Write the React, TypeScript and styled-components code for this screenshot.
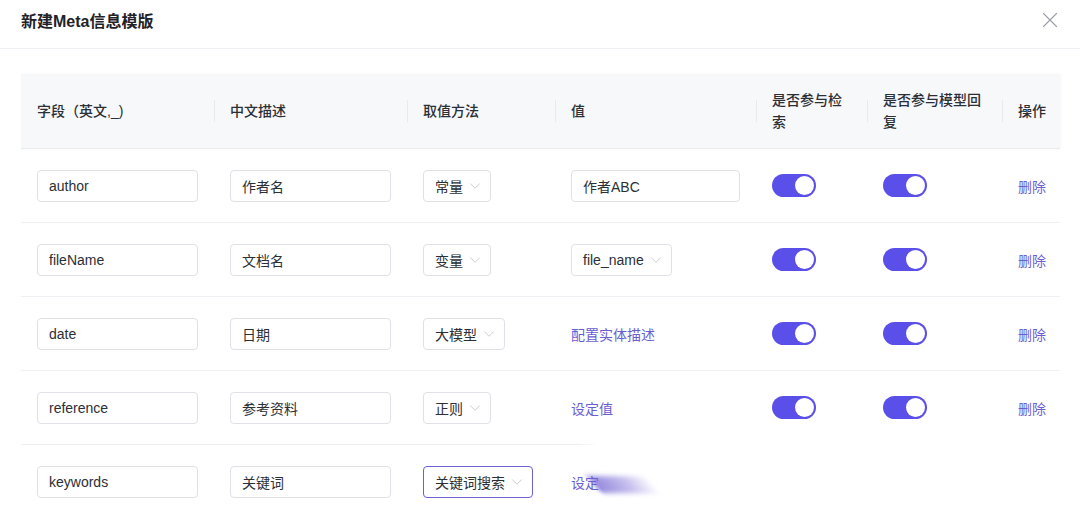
import React from "react";
import styled, { createGlobalStyle, css } from "styled-components";
import { X, ChevronDown } from "lucide-react";

const GlobalStyle = createGlobalStyle`
  body {
    margin: 0;
    background: #fff;
    font-family: "Liberation Sans", "Noto Sans CJK SC", sans-serif;
    color: #1f2329;
  }
  * { box-sizing: border-box; }
`;

const COLS = "193px 193px 148px 201px 111px 135px 58px";
const PURPLE = "#5b4fe9";
const LINK = "#6b5dd3";

const Modal = styled.div`
  width: 1080px;
  height: 516px;
  overflow: hidden;
  background: #fff;
`;

const Header = styled.div`
  height: 49px;
  display: flex;
  align-items: center;
  justify-content: space-between;
  padding: 0 17px 8px 21px;
  border-bottom: 1px solid #f0f1f4;
`;

const Title = styled.h3`
  margin: 0;
  font-size: 16px;
  font-weight: 600;
  color: #1f2329;
`;

const CloseBtn = styled.span`
  display: flex;
  color: #9a9ea7;
`;

const Body = styled.div`
  padding: 25px 20px 0 21px;
`;

const Table = styled.div`
  width: 1039px;
`;

const HeadRow = styled.div`
  display: grid;
  grid-template-columns: ${COLS};
  height: 75px;
  align-items: center;
  background: #f7f8fa;
  border-bottom: 1px solid #e9ebef;
  box-shadow: 1px 0 3px rgba(0, 0, 0, 0.04);
`;

const HeadCell = styled.div<{ $first?: boolean }>`
  position: relative;
  padding: 0 16px;
  font-size: 14px;
  font-weight: 500;
  line-height: 22px;
  color: #2b2f36;
  white-space: ${(p) => (p.$first ? "nowrap" : "normal")};
  ${(p) =>
    !p.$first &&
    css`
      &::before {
        content: "";
        position: absolute;
        left: 0;
        top: 50%;
        height: 22px;
        margin-top: -11px;
        width: 1px;
        background: #e8eaee;
      }
    `}
  &:last-child {
    padding-right: 0;
    white-space: nowrap;
  }
`;

const Row = styled.div<{ $divider: "full" | "partial" | "none" }>`
  display: grid;
  grid-template-columns: ${COLS};
  height: 74px;
  align-items: center;
  ${(p) =>
    p.$divider === "full" &&
    css`
      border-bottom: 1px solid #eef0f3;
    `}
  ${(p) =>
    p.$divider === "partial" &&
    css`
      padding-bottom: 1px;
      background: linear-gradient(to right, #eceef2 0, #eceef2 555px, rgba(236, 238, 242, 0) 578px)
        left bottom / 100% 1px no-repeat;
    `}
`;

const Cell = styled.div`
  padding: 0 16px;
  display: flex;
  align-items: center;
  &:last-child {
    padding-right: 0;
  }
`;

const Input = styled.div<{ $w: number }>`
  width: ${(p) => p.$w}px;
  height: 32px;
  display: flex;
  align-items: center;
  padding: 0 11px;
  border: 1px solid #dfe1e6;
  border-radius: 4px;
  font-size: 14px;
  color: #2b2f36;
`;

const Select = styled.div<{ $active?: boolean }>`
  height: 32px;
  display: inline-flex;
  align-items: center;
  gap: 5px;
  padding: 0 8px 0 11px;
  border: 1px solid ${(p) => (p.$active ? "#6b61d6" : "#dfe1e6")};
  border-radius: 4px;
  font-size: 14px;
  color: #2b2f36;
  white-space: nowrap;
  svg {
    color: #bfc2c9;
    margin: 0 -2px;
  }
`;

const Link = styled.span`
  font-size: 14px;
  color: ${LINK};
  white-space: nowrap;
`;

const Smear = styled.span`
  display: inline-block;
  width: 60px;
  height: 17px;
  margin-left: -6px;
  vertical-align: middle;
  background: linear-gradient(
    90deg,
    rgba(110, 95, 210, 0.75) 0%,
    rgba(125, 110, 215, 0.45) 55%,
    rgba(150, 140, 225, 0) 100%
  );
  filter: blur(2.5px);
  transform: skewX(40deg) translateY(1px);
`;

const Toggle = styled.span`
  position: relative;
  width: 44px;
  height: 23px;
  border-radius: 12px;
  background: ${PURPLE};
  &::after {
    content: "";
    position: absolute;
    right: 2px;
    top: 2px;
    width: 19px;
    height: 19px;
    border-radius: 50%;
    background: #fff;
  }
`;

type Method = { label: string; active?: boolean };
type Value =
  | { kind: "input"; text: string }
  | { kind: "select"; text: string }
  | { kind: "link"; text: string; smear?: boolean };

interface RowData {
  field: string;
  desc: string;
  method: Method;
  value: Value;
  toggles: boolean;
  divider: "full" | "partial" | "none";
}

const rows: RowData[] = [
  { field: "author", desc: "作者名", method: { label: "常量" }, value: { kind: "input", text: "作者ABC" }, toggles: true, divider: "full" },
  { field: "fileName", desc: "文档名", method: { label: "变量" }, value: { kind: "select", text: "file_name" }, toggles: true, divider: "full" },
  { field: "date", desc: "日期", method: { label: "大模型" }, value: { kind: "link", text: "配置实体描述" }, toggles: true, divider: "full" },
  { field: "reference", desc: "参考资料", method: { label: "正则" }, value: { kind: "link", text: "设定值" }, toggles: true, divider: "partial" },
  { field: "keywords", desc: "关键词", method: { label: "关键词搜索", active: true }, value: { kind: "link", text: "设定", smear: true }, toggles: false, divider: "none" },
];

const headers = ["字段（英文,_)", "中文描述", "取值方法", "值", "是否参与检索", "是否参与模型回复", "操作"];

const Chevron = () => <ChevronDown size={18} strokeWidth={1.1} />;

const ValueCell: React.FC<{ value: Value }> = ({ value }) => {
  if (value.kind === "input") return <Input $w={170}>{value.text}</Input>;
  if (value.kind === "select")
    return (
      <Select>
        {value.text}
        <Chevron />
      </Select>
    );
  return (
    <Link>
      {value.text}
      {value.smear && <Smear />}
    </Link>
  );
};

const App: React.FC = () => {
  return (
    <Modal>
      <GlobalStyle />
      <Header>
        <Title>新建Meta信息模版</Title>
        <CloseBtn>
          <X size={26} strokeWidth={1} />
        </CloseBtn>
      </Header>
      <Body>
        <Table>
          <HeadRow>
            {headers.map((h, i) => (
              <HeadCell key={h} $first={i === 0}>
                {h}
              </HeadCell>
            ))}
          </HeadRow>
          {rows.map((r) => (
            <Row key={r.field} $divider={r.divider}>
              <Cell>
                <Input $w={161}>{r.field}</Input>
              </Cell>
              <Cell>
                <Input $w={161}>{r.desc}</Input>
              </Cell>
              <Cell>
                <Select $active={r.method.active}>
                  {r.method.label}
                  <Chevron />
                </Select>
              </Cell>
              <Cell>
                <ValueCell value={r.value} />
              </Cell>
              <Cell>{r.toggles && <Toggle />}</Cell>
              <Cell>{r.toggles && <Toggle />}</Cell>
              <Cell>{r.toggles && <Link>删除</Link>}</Cell>
            </Row>
          ))}
        </Table>
      </Body>
    </Modal>
  );
};

export default App;
